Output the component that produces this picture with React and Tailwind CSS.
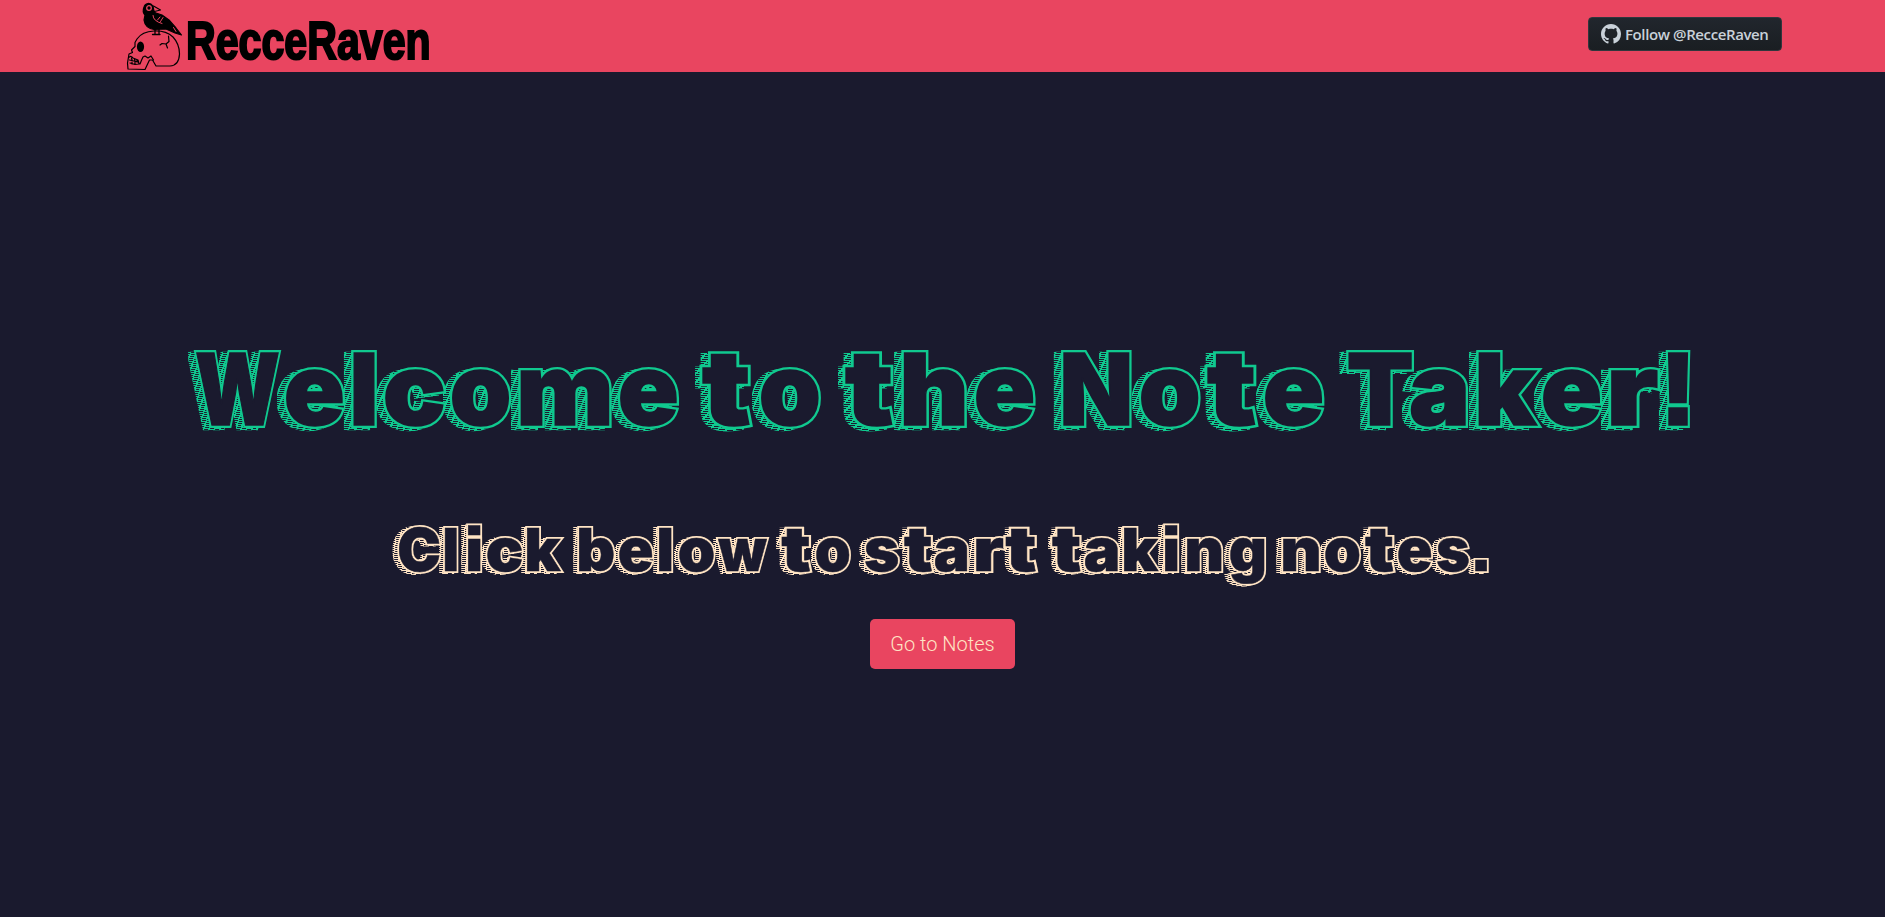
import React from "react";

// Inter Black ink extents (left, right) in em.
const INK = {
  W: [0.016, 1.063], e: [0.022, 0.58], l: [0.047, 0.25], c: [0.022, 0.58], o: [0.022, 0.605],
  m: [0.047, 0.9], t: [0.005, 0.39], h: [0.047, 0.606], N: [0.047, 0.725], T: [0.016, 0.67],
  a: [0.02, 0.555], k: [0.047, 0.62], r: [0.047, 0.42], "!": [0.078, 0.297], C: [0.031, 0.72],
  i: [0.047, 0.25], b: [0.047, 0.622], w: [-0.005, 0.885], s: [0.018, 0.565], n: [0.047, 0.606],
  g: [0.022, 0.603], ".": [0.078, 0.297],
};

// Each word: [letter, face width, advance to the next letter] in pixels.
const TITLE = [
  [["W", 87, 89.2], ["e", 62.3, 68], ["l", 26.3, 31.3], ["c", 64.7, 67.3], ["o", 63.4, 68.4], ["m", 94.3, 99.8], ["e", 62.3, 81.8]],
  [["t", 54.3, 59], ["o", 64, 84]],
  [["t", 54, 58.7], ["h", 66.5, 71.7], ["e", 62.8, 88.3]],
  [["N", 70.7, 77], ["o", 63.7, 65.7], ["t", 55, 58.5], ["e", 62.6, 83]],
  [["T", 70, 63.3], ["a", 61, 67.5], ["k", 65, 64.4], ["e", 62.6, 67.6], ["r", 52.5, 57], ["!", 25.5, 26]],
];
const LEAD = [
  [["C", 44.3, 46.6], ["l", 15.5, 22.7], ["i", 16.3, 19], ["c", 39, 40.7], ["k", 38.3, 51.6]],
  [["b", 38.7, 40.4], ["e", 37, 40], ["l", 16.3, 20], ["o", 39, 38.3], ["w", 53, 63]],
  [["t", 33.5, 35.5], ["o", 37.5, 48.4]],
  [["s", 37, 39.1], ["t", 32.5, 31.7], ["a", 36.5, 40.3], ["r", 32, 29.5], ["t", 35.5, 47]],
  [["t", 33.2, 32.5], ["a", 37, 39.7], ["k", 39, 40.3], ["i", 16.3, 22.7], ["n", 38.5, 42.3], ["g", 38.3, 53]],
  [["n", 40, 42], ["o", 38.7, 40], ["t", 33, 33.7], ["e", 37, 38.3], ["s", 35.5, 38], [".", 16.3, 17]],
];

const layers =
  "relative block before:absolute before:-z-10 before:content-[attr(data-char)] before:[transform:var(--fit)] before:[transform-origin:var(--base)] before:text-transparent before:bg-clip-text after:absolute after:left-0 after:top-0 after:content-[attr(data-char)] after:[transform:var(--fit)] after:[transform-origin:var(--base)] after:text-[#1a1a2e]";
const titleLayers =
  "before:-left-[7px] before:top-[1.5px] before:bg-[repeating-linear-gradient(9deg,#10c98f_0_1.35px,transparent_1.35px_2.1px)] before:[-webkit-text-stroke:6.5px_transparent] after:[-webkit-text-stroke:1.400px_#1a1a2e]";
const leadLayers =
  "before:-left-[4.300px] before:top-[1px] before:bg-[repeating-linear-gradient(12deg,#ffe4c4_0_1.2px,transparent_1.2px_2px)] before:[-webkit-text-stroke:4px_transparent] after:[-webkit-text-stroke:0.500px_#1a1a2e]";
const titleInk = "[-webkit-text-stroke:6px_#10c98f] text-[#10c98f] [text-shadow:-1px_0.5px_#10c98f,-2px_1px_#10c98f]";
const leadInk = "[-webkit-text-stroke:4px_#ffe4c4] text-[#ffe4c4] [text-shadow:-1.3px_0.5px_#ffe4c4]";

function Sketch({ words, size, stroke, baseline, layerClass, inkClass }) {
  return words.map((word, w) => (
    <span key={w} className="flex">
      {word.map(([char, face, advance], i) => {
        const [left, right] = INK[char];
        const sx = face / ((right - left) * size + stroke);
        const sy = char === "t" ? 1.06 : 1;
        const fit = `translateX(${-(left * size - stroke / 2) * sx}px) scale(${sx}, ${sy})`;
        return (
          <span
            key={i}
            data-char={char}
            className={layers + " " + layerClass}
            style={{ width: advance, "--fit": fit, "--base": `0 ${baseline}px` }}
          >
            <span className={"inline-block [transform:var(--fit)] [transform-origin:var(--base)] " + inkClass}>{char}</span>
          </span>
        );
      })}
    </span>
  ));
}

function RavenSkull() {
  return (
    <svg viewBox="0 0 70 72" className="block h-[72px] w-[70px] shrink-0" fill="none" stroke="#000" strokeWidth="1.2" strokeLinejoin="round" strokeLinecap="round">
      <path d="M24 7C25 3 30 2 33 6Q34 13 36 13L42 15L49 20L56 28L61.500 35L55 33L46 29L34 29.500Q25 28 24 20L25 15Q22 12 24 7Z" fill="#000" />
      <path d="M33.500 6L40.500 10L34.500 11.500" strokeWidth="1.1" />
      <circle cx="29" cy="8" r="2.300" fill="#000" stroke="#e94560" strokeWidth="1.300" />
      <path d="M33 15.500Q33 21 42 23.500M37.500 20L40 17M40.500 21.500L43 17.500M53.500 27.500L56 31.500" stroke="#e94560" strokeWidth="1" />
      <path d="M35 29V34M39 29V34M32.500 34.500H40" strokeWidth="1.300" />
      <path d="M17 39Q22 31.500 34 31Q46 30.500 53 37Q59.500 44 59.500 54Q59 65.500 50 66H36L32.500 60L29.500 60L25 69.500L8 69L7.500 63L9 54L12.500 52.500L11.500 50L15 46.500V42.500Z" />
      <path d="M48.500 36L49 41.500L46 44L42 43.500L40 45M46 44L47.500 48" />
      <path d="M9.500 57Q11 55.500 13 58L18 60L19 64L15 64.500L10 63M11.500 58L12 60M14.500 59L15 61M17 60V62M12 62V64M15 62V64M9.500 60L18 62M20 64Q21.500 60 23 57L25 56L28 58L31 56L33.500 60" />
      <ellipse cx="20.500" cy="46.800" rx="3.600" ry="5.200" fill="#000" stroke="none" />
    </svg>
  );
}

function GitHubMark() {
  return (
    <svg viewBox="0 0 16 16" className="size-5 shrink-0" fill="#c9d1d9">
      <path d="M8 0C3.580 0 0 3.580 0 8c0 3.540 2.290 6.530 5.470 7.590.4.070.55-.17.55-.38 0-.19-.01-.82-.01-1.490-2.010.37-2.530-.49-2.690-.94-.09-.23-.48-.94-.82-1.130-.28-.15-.68-.52-.01-.53.63-.01 1.080.58 1.230.82.72 1.210 1.870.87 2.330.66.07-.52.28-.87.51-1.070-1.780-.2-3.640-.89-3.640-3.950 0-.87.31-1.590.82-2.150-.08-.2-.36-1.020.08-2.120 0 0 .67-.21 2.200.82.64-.18 1.320-.27 2-.27s1.360.09 2 .27c1.530-1.040 2.200-.82 2.200-.82.44 1.100.16 1.920.08 2.120.51.56.82 1.270.82 2.150 0 3.070-1.870 3.750-3.650 3.950.29.25.54.73.54 1.480 0 1.070-.01 1.930-.01 2.200 0 .21.15.46.55.38A8.010 8.010 0 0 0 16 8c0-4.420-3.580-8-8-8z" />
    </svg>
  );
}

export default function App() {
  return (
    <div className="flex h-[917px] flex-col overflow-hidden bg-[#1a1a2e]">
      <header className="flex h-[72px] shrink-0 items-start justify-between bg-[#e94560] pl-[120px] pr-[103px]">
        <a className="flex h-[72px] w-[320px]">
          <RavenSkull />
          <span className="-ml-[4px] block w-0 origin-left scale-x-[0.762] whitespace-nowrap pt-[10px] font-['Liberation_Sans',sans-serif] text-[54px] leading-[60px] font-bold text-black [-webkit-text-stroke:2.200px_#000]">
            RecceRaven
          </span>
        </a>
        <a className="mt-[17px] flex h-[34px] w-[194px] items-center gap-[4px] rounded-[4px] border border-[#30363d] bg-linear-to-b from-[#21262d] to-[#1a1e22] pl-[12px] font-['Open_Sans',sans-serif] text-[15px] font-semibold tracking-[-0.39px] whitespace-nowrap text-[#c9d1d9]">
          <GitHubMark />
          <span>Follow @RecceRaven</span>
        </a>
      </header>
      <main className="flex flex-col items-center pt-[257px]">
        <h1
          aria-label="Welcome to the Note Taker!"
          className="isolate flex h-[120px] w-[1498px] items-start font-['Inter',sans-serif] text-[99px] leading-[120px] font-black [font-feature-settings:'ss07']"
        >
          <Sketch words={TITLE} size={99} stroke={6} baseline={96} layerClass={titleLayers} inkClass={titleInk} />
        </h1>
        <h2
          aria-label="Click below to start taking notes."
          className="isolate mt-[61px] flex h-[80px] w-[1092px] items-start font-['Inter',sans-serif] text-[59px] leading-[80px] font-black [font-feature-settings:'ss07']"
        >
          <Sketch words={LEAD} size={59} stroke={4} baseline={61.5} layerClass={leadLayers} inkClass={leadInk} />
        </h2>
        <button className="mt-[29px] h-[50px] w-[145px] rounded-[5px] bg-[#e94560] font-['Roboto',sans-serif] text-[20px] font-light text-[#ffe4c4]">
          Go to Notes
        </button>
      </main>
    </div>
  );
}
